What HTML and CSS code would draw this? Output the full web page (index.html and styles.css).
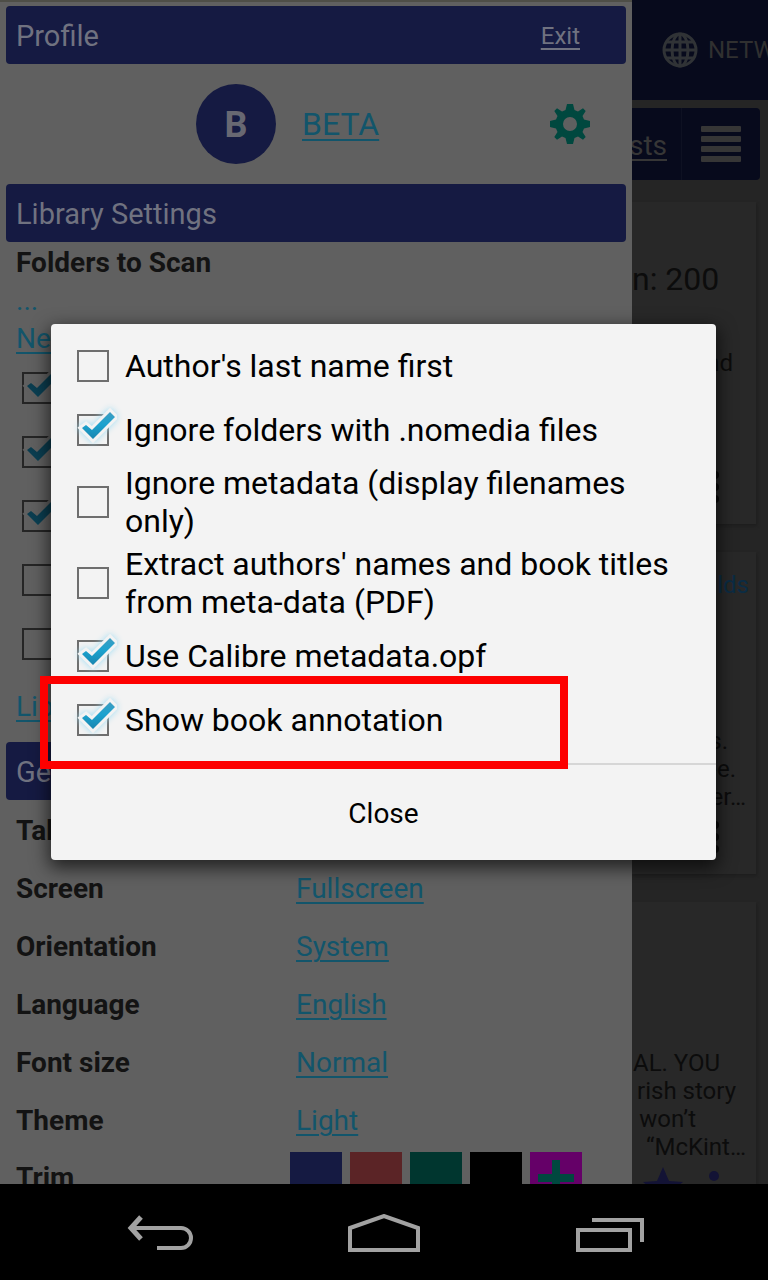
FILE: index.html
```
<!DOCTYPE html>
<html lang="en">
<head>
<meta charset="utf-8">
<meta name="viewport" content="width=device-width, initial-scale=1">
<title>Library Settings</title>
<link rel="stylesheet" href="styles.css">
</head>
<body>
<svg class="defs" aria-hidden="true">
  <defs>
    <linearGradient id="tickBlue" x1="0" y1="0" x2="0" y2="1"><stop offset="0" stop-color="#3f9cc0"/><stop offset="0.45" stop-color="#1ba3cf"/><stop offset="1" stop-color="#1a86b0"/></linearGradient>
    <linearGradient id="tickDim" x1="0" y1="0" x2="0" y2="1"><stop offset="0" stop-color="#0c3848"/><stop offset="1" stop-color="#0a4054"/></linearGradient>
  </defs>
  <symbol id="tick" viewBox="0 0 48 48">
    <path class="tick-gap" d="M13 22 17 19 23 24 41 6 46 11 24 33Z"/>
    <path class="tick-mark" d="M13 22 17 19 23 24 41 6 46 11 24 33Z"/>
  </symbol>
</svg>
<div class="device">
  <main class="screen">
    <section class="drawer">
      <header class="bar"><h2>Profile</h2><a class="exit" href="#">Exit</a></header>
      <div class="profile">
        <span class="avatar">B</span>
        <a class="profile-name" href="#">BETA</a>
        <button class="gear" aria-label="Profile settings">
          <svg viewBox="0 0 40 40"><path fill="#00483f" fill-rule="evenodd" d="M17 0h6l1.500 6 3.500 1.500L33 4.300 35.700 7 32.500 12 34 15.500 40 17v6l-6 1.500-1.500 3.500 3.200 5-2.700 2.700-5-3.200-3.500 1.500L23 40h-6l-1.500-6-3.500-1.500-5 3.200L4.300 33l3.200-5L6 24.500 0 23v-6l6-1.500L7.500 12 4.300 7 7 4.300l5 3.200L15.500 6ZM20 13a7 7 0 1 0 0 14 7 7 0 0 0 0-14Z"/></svg>
        </button>
      </div>
      <header class="bar"><h2>Library Settings</h2></header>
      <div class="folders">
        <h3>Folders to Scan</h3>
        <a class="plain" href="#">...</a>
        <a href="#">New</a>
      </div>
      <div class="checks">
        <span class="box"><input type="checkbox" aria-label="Folder 1" checked><svg><use href="#tick"/></svg></span>
        <span class="box"><input type="checkbox" aria-label="Folder 2" checked><svg><use href="#tick"/></svg></span>
        <span class="box"><input type="checkbox" aria-label="Folder 3" checked><svg><use href="#tick"/></svg></span>
        <span class="box"><input type="checkbox" aria-label="Folder 4"></span>
        <span class="box"><input type="checkbox" aria-label="Folder 5"></span>
      </div>
      <div class="library-link"><a href="#">Lib</a></div>
      <header class="bar"><h2>Ge</h2></header>
      <dl class="settings">
        <div><dt>Tab</dt><dd></dd></div>
        <div><dt>Screen</dt><dd><a href="#">Fullscreen</a></dd></div>
        <div><dt>Orientation</dt><dd><a href="#">System</a></dd></div>
        <div><dt>Language</dt><dd><a href="#">English</a></dd></div>
        <div><dt>Font size</dt><dd><a href="#">Normal</a></dd></div>
        <div><dt>Theme</dt><dd><a href="#">Light</a></dd></div>
        <div><dt>Trim</dt><dd class="swatches">
          <button class="swatch indigo" aria-label="Indigo"></button>
          <button class="swatch red" aria-label="Red"></button>
          <button class="swatch teal" aria-label="Teal"></button>
          <button class="swatch black" aria-label="Black"></button>
          <button class="swatch custom" aria-label="Custom colour"><svg viewBox="0 0 36 36"><path d="M14 0h8v14h14v8H22v14h-8V22H0v-8h14Z" fill="#00483f"/></svg></button>
        </dd></div>
      </dl>
    </section>

    <section class="page">
      <nav class="tabs">
        <svg viewBox="0 0 36 36" width="36" height="36"><g fill="none" stroke="#303336" stroke-width="3"><circle cx="18" cy="18" r="16"/><ellipse cx="18" cy="18" rx="8" ry="16"/><path d="M18 2v32M2 18h32M4 10h28M4 26h28"/></g></svg>
        <span>NETWORK</span>
      </nav>
      <div class="toolbar">
        <a href="#">sts</a>
        <button aria-label="View mode"><i></i><i></i><i></i><i></i></button>
      </div>
      <div class="cards">
        <article class="card first">
          <p class="count">n: 200</p>
          <p class="author">nd</p>
          <span class="more"><i></i><i></i><i></i></span>
        </article>
        <article class="card second">
          <p class="series">lds</p>
          <div class="note"><p class="in-l">s.</p><p class="in-m">ee.</p><p>er…</p></div>
          <span class="more"><i></i><i></i><i></i></span>
        </article>
        <article class="card third">
          <div class="note"><p class="in-xl">AL. YOU</p><p class="in-m">rish story</p><p class="in-xxl">won’t</p><p>“McKint…</p></div>
          <div class="actions">
            <svg viewBox="0 0 40 40" width="40" height="40"><path fill="#131335" d="M20 0 26 14 40 15 29 24 33 38 20 30 7 38 11 24 0 15 14 14Z"/></svg>
            <span class="more dots"><i></i><i></i><i></i></span>
          </div>
        </article>
      </div>
    </section>

    <div class="overlay">
      <form class="dialog" role="dialog" aria-label="Library options">
        <div class="options">
          <label class="option"><span class="box"><input type="checkbox"></span><span>Author's last name first</span></label>
          <label class="option"><span class="box"><input type="checkbox" checked><svg><use href="#tick"/></svg></span><span>Ignore folders with .nomedia files</span></label>
          <label class="option"><span class="box"><input type="checkbox"></span><span>Ignore metadata (display filenames only)</span></label>
          <label class="option"><span class="box"><input type="checkbox"></span><span>Extract authors' names and book titles from meta-data (PDF)</span></label>
          <label class="option"><span class="box"><input type="checkbox" checked><svg><use href="#tick"/></svg></span><span>Use Calibre metadata.opf</span></label>
          <label class="option marked"><span class="box"><input type="checkbox" checked><svg><use href="#tick"/></svg></span><span>Show book annotation</span></label>
        </div>
        <button class="close" type="button">Close</button>
      </form>
    </div>
  </main>

  <nav class="system">
    <button aria-label="Back"><svg viewBox="0 0 72 40" width="72" height="40"><g fill="none" stroke="#a2a2a2" stroke-width="4"><path d="M9 14h48a10 10 0 0 1 0 20H33"/><path d="M17 3 7 14l10 11" stroke-width="5"/></g></svg></button>
    <button aria-label="Home"><svg viewBox="0 0 72 40" width="72" height="40"><path d="M2 14 36 2 70 14V36H2Z" fill="none" stroke="#a2a2a2" stroke-width="4"/></svg></button>
    <button aria-label="Recent apps"><svg viewBox="0 0 72 40" width="72" height="40"><path d="M6 16h52v20H6ZM20 6h50v22" fill="none" stroke="#a2a2a2" stroke-width="4"/></svg></button>
  </nav>
</div>
</body>
</html>
```
FILE: styles.css
```
* { box-sizing: border-box; }
body { margin: 0; font-family: Roboto, "Liberation Sans", sans-serif; background: #000; color: #131313; }
h2, h3, p, dl, dd { margin: 0; }
button { border: 0; padding: 0; background: none; font: inherit; color: inherit; }
svg { display: block; }
.defs { position: absolute; width: 0; height: 0; }

.device { height: 100vh; display: grid; grid-template-rows: minmax(0, 1fr) 96px; }
.screen { position: relative; display: grid; grid-template-columns: minmax(0, 1fr) 136px; overflow: hidden; }

/* Drawer */
.drawer { background: #606060; padding: 4px 6px 0; border-top: 2px solid #4e4e47; font-size: 28px; overflow: hidden; }
.drawer a { color: #12556b; text-decoration-thickness: 2px; text-underline-offset: 4px; }
.bar { display: flex; align-items: center; justify-content: space-between; height: 58px; padding: 2px 46px 0 10px; border-radius: 4px; background: #151a42; color: #707280; }
.bar h2 { font-size: 29px; font-weight: 400; line-height: 40px; }
.drawer .exit { color: #707280; font-size: 24px; }
.profile { display: flex; align-items: center; height: 120px; padding: 0 36px 0 190px; }
.avatar { display: grid; place-items: center; width: 80px; height: 80px; padding-top: 2px; border-radius: 50%; background: #151a42; color: #686872; font-size: 36px; font-weight: 700; }
.profile-name { margin-left: 26px; font-size: 32px; }
.gear { width: 40px; height: 40px; margin-left: auto; }
.folders { display: flex; flex-direction: column; align-items: flex-start; height: 114px; padding: 2px 10px 0; line-height: 38px; }
.folders h3 { font-size: 28px; }
.drawer .plain { text-decoration: none; }
.checks { display: flex; flex-direction: column; gap: 32px; padding: 16px 16px; }
.library-link { display: flex; align-items: center; height: 60px; margin-bottom: 6px; padding: 0 10px; }
.settings > div { display: grid; grid-template-columns: 280px 1fr; align-items: center; height: 58px; padding: 4px 10px 0; line-height: 38px; }
.settings dt { font-weight: 700; }
.settings > div:last-child { height: 60px; padding: 4px 10px; }
.swatches { display: flex; gap: 8px; margin-left: -6px; }
.swatch { display: grid; place-items: center; width: 52px; height: 52px; }
.indigo { background: #151a42; }
.red { background: #5b2426; }
.teal { background: #00362f; }
.black { background: #000; }
.custom { background: #650068; }
.custom svg { width: 36px; height: 36px; }

/* Check boxes */
.box { position: relative; flex: none; display: block; width: 32px; height: 32px; --gap: #606060; --mark: url(#tickDim); }
.box input { appearance: none; display: block; width: 32px; height: 32px; margin: 0; border: 2px solid #252525; }
.box svg { position: absolute; left: -8px; top: -8px; width: 48px; height: 48px; pointer-events: none; }
.tick-gap { fill: none; stroke: var(--gap); stroke-width: 6px; }
.tick-mark { fill: var(--mark); }

/* Library page beside the drawer */
.page { display: flex; flex-direction: column; background: #252525; color: #0c0c0c; overflow: hidden; font-size: 24px; }
.tabs { flex: none; display: flex; align-items: center; gap: 10px; height: 100px; padding-left: 30px; background: #070a1c; color: #303030; }
.tabs svg { flex: none; }
.toolbar { flex: none; display: grid; grid-template-columns: 49px 1fr; height: 72px; margin: 8px 8px 22px 0; border-radius: 0 4px 4px 0; background: #070a1c; }
.toolbar a { align-self: center; justify-self: end; margin-right: 14px; padding-top: 2px; color: #363636; font-size: 28px; text-decoration-thickness: 2px; text-underline-offset: 4px; }
.toolbar button { display: flex; flex-direction: column; align-items: center; justify-content: center; gap: 4px; border-left: 1px solid #0e1122; }
.toolbar i { width: 40px; height: 6px; border-radius: 1px; background: #363636; }
.cards { display: flex; flex-direction: column; gap: 28px; padding-right: 12px; }
.card { display: flex; flex-direction: column; background: #282828; box-shadow: 1px 2px 3px #1d1d1d; text-align: right; white-space: nowrap; overflow: hidden; line-height: 28px; }
.first, .second { height: 322px; }
.third { height: 340px; padding-top: 147px; }
.count { padding: 59px 42px 0 0; font-size: 32px; line-height: 36px; }
.author { padding: 52px 23px 0 0; }
.series { padding: 19px 7px 0 0; color: #0b2c44; }
.first .more { margin-top: 94px; }
.note { padding-right: 10px; }
.second .note { padding-top: 128px; }
.in-m { padding-right: 10px; }
.in-l { padding-right: 18px; }
.in-xl { padding-right: 26px; }
.in-xxl { padding-right: 50px; }
.more { align-self: flex-end; display: grid; gap: 4px; margin: 10px 37px 0 0; }
.more i { width: 8px; height: 8px; border-radius: 50%; background: #0c0c0c; }
.actions { display: flex; justify-content: flex-end; gap: 26px; padding: 6px 37px 0 0; }
.actions .dots { align-self: flex-start; margin: 4px 0 0; }
.dots i { width: 10px; height: 10px; background: #131335; }

/* Dialog */
.overlay { position: absolute; inset: 0; display: grid; align-items: center; padding: 0 52px 0 51px; }
.dialog { border-radius: 4px; background: #f3f3f3; color: #000; box-shadow: 0 6px 18px 2px rgba(0, 0, 0, .65); }
.options { padding: 10px 26px 11px; }
.option { position: relative; display: flex; align-items: center; gap: 16px; min-height: 64px; padding: 2px 0 3px; font-size: 32px; line-height: 38px; }
.option .box { --gap: #f3f3f3; --mark: url(#tickBlue); }
.option .box input { border-color: #6e6e6e; }
.option .box svg { filter: drop-shadow(0 0 3px #9fdcf3); }
.marked::after { content: ""; position: absolute; top: -12px; bottom: -17px; left: -37px; right: 122px; border: 8px solid #fd0000; }
.close { display: block; width: 100%; height: 97px; padding-top: 2px; border-top: 2px solid #d6d6d6; font-size: 28px; }

/* System bar */
.system { display: flex; padding: 0 48px; background: #000; }
.system button { flex: 1; display: grid; place-items: center; padding-top: 4px; }
```
